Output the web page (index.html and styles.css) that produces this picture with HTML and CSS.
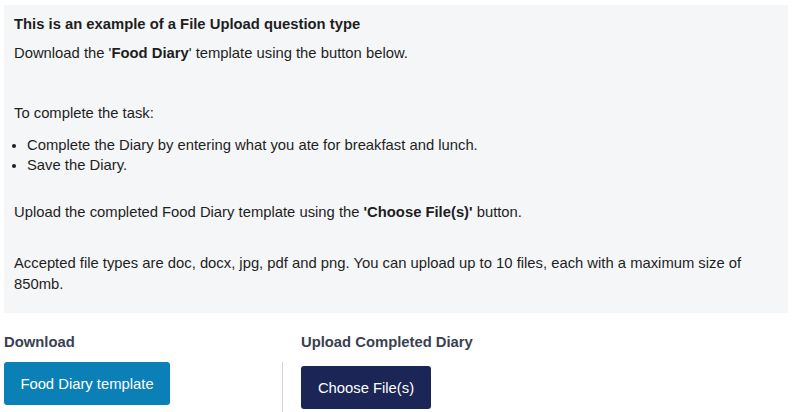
FILE: index.html
```html
<!DOCTYPE html>
<html>
<head>
<meta charset="utf-8">
<link rel="stylesheet" href="styles.css">
</head>
<body>
<div class="page">
  <div class="panel">
    <p class="title">This is an example of a File Upload question type</p>
    <p class="line l-download">Download the '<b>Food Diary</b>' template using the button below.</p>
    <p class="line l-task">To complete the task:</p>
    <ul class="list">
      <li>Complete the Diary by entering what you ate for breakfast and lunch.</li>
      <li>Save the Diary.</li>
    </ul>
    <p class="line l-upload">Upload the completed Food Diary template using the <b>'Choose File(s)'</b> button.</p>
    <p class="line l-accept">Accepted file types are doc, docx, jpg, pdf and png. You can upload up to 10 files, each with a maximum size of 850mb.</p>
  </div>
  <div class="actions">
    <div class="col col-left">
      <div class="label">Download</div>
      <button class="btn btn-blue">Food Diary template</button>
    </div>
    <div class="col col-right">
      <div class="label">Upload Completed Diary</div>
      <div class="right-body">
        <button class="btn btn-navy">Choose File(s)</button>
      </div>
    </div>
  </div>
</div>
</body>
</html>
```
FILE: styles.css
```css
* { box-sizing: border-box; }
html, body { margin: 0; padding: 0; background: #ffffff; }
body {
  font-family: "Liberation Sans", Arial, sans-serif;
  font-size: 14.8px;
  color: #1e1e1e;
  line-height: 20px;
}
.page { padding: 5px 4px 0 4px; width: 792px; }
.panel {
  background: #f5f6f8;
  width: 784px;
  height: 308px;
  padding: 9px 20px 0 10px;
}
.panel p { margin: 0; }
.title { font-weight: bold; }
.l-download { margin-top: 9px !important; }
.l-task { margin-top: 40px !important; }
.list { margin: 12px 0 0 0; padding: 0 0 0 13px; }
.list li { line-height: 20px; }
.l-upload { margin-top: 27px !important; }
.l-accept { margin-top: 31px !important; line-height: 21px; }
.actions { display: flex; margin-top: 19px; }
.col { display: flex; flex-direction: column; }
.col-left { width: 278px; }
.label { font-weight: bold; color: #394150; height: 20px; line-height: 20px; }
.col-left .btn { margin-top: 10px; }
.right-body {
  margin-top: 10px;
  border-left: 1px solid #d4d6d9;
  padding-left: 18px;
  padding-top: 4px;
  height: 60px;
}
.col-right .label { padding-left: 19px; }
.btn {
  font-family: "Liberation Sans", Arial, sans-serif;
  font-size: 14.8px;
  color: #ffffff;
  border: none;
  border-radius: 3px;
  height: 43px;
  padding: 0;
  cursor: pointer;
}
.btn-blue { background: #0a80b6; width: 166px; }
.btn-navy { background: #1b2657; width: 130px; }
```
